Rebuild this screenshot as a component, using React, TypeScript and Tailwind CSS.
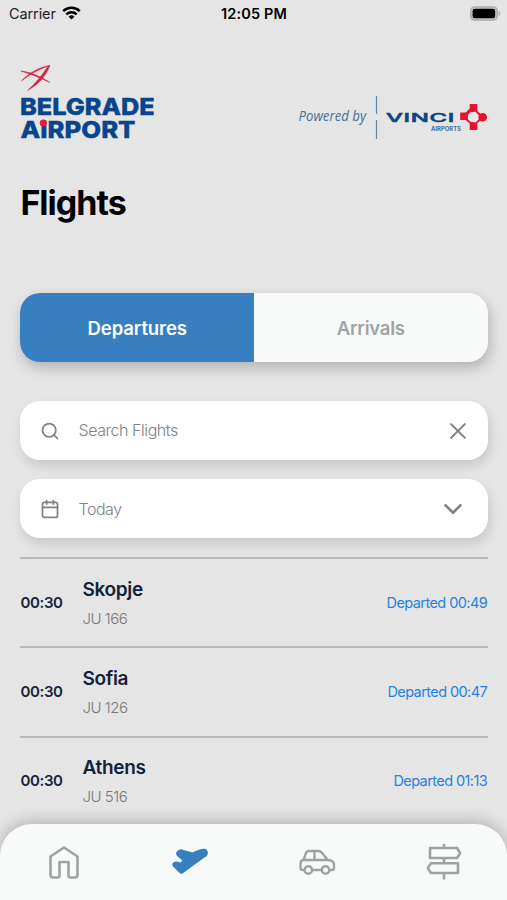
import { Calendar, ChevronDown, Search, X } from "lucide-react";

const flights = [
  { time: "00:30", city: "Skopje", code: "JU 166", status: "Departed 00:49" },
  { time: "00:30", city: "Sofia", code: "JU 126", status: "Departed 00:47" },
  { time: "00:30", city: "Athens", code: "JU 516", status: "Departed 01:13" },
];

function StatusBar() {
  return (
    <div className="grid h-7 shrink-0 grid-cols-3 items-center pl-[9px] pr-[6px] text-black">
      <div className="flex items-center gap-[6px]">
        <span className="text-[14.5px] leading-7 tracking-[-0.1px] text-[#222]">Carrier</span>
        <svg className="-translate-y-px" width="19" height="14" viewBox="0 0 19 14" fill="none" stroke="#000" strokeWidth="2.5">
          <path d="M1.2 5.2a12 12 0 0 1 16.6 0" />
          <path d="M4.3 8.4a7.6 7.6 0 0 1 10.4 0" />
          <path d="M6.6 10.7a4.2 4.2 0 0 1 5.8 0L9.5 13.6Z" fill="#000" stroke="none" />
        </svg>
      </div>
      <span className="-ml-[2px] text-center text-[14.5px] font-semibold leading-7 tracking-[0.15px]">12:05 PM</span>
      <svg className="-translate-y-px justify-self-end" width="31" height="15" viewBox="0 0 31 15">
        <rect x="0.8" y="0.8" width="26.4" height="13.4" rx="4" fill="#c4c4c4" stroke="#aaa" strokeWidth="1.3" />
        <rect x="2.6" y="2.8" width="22.6" height="9.4" rx="2.2" fill="#000" />
        <path d="M28.6 5v5c2-.8 2-4.2 0-5Z" fill="#aaa" />
      </svg>
    </div>
  );
}

function BelgradeLogo() {
  return (
    <svg width="136" height="84" viewBox="0 0 136 84">
      <g fill="#d9203f">
        <path d="M0.8 7C10 8 20 12 29.5 18.3C20 13.8 10 9.7.8 7Z" stroke="#d9203f" strokeWidth=".6" />
        <path d="M1.5 17C9 9 19 3.2 30 1.5C20 4.5 10 10 1.5 17Z" stroke="#d9203f" strokeWidth=".6" />
        <path d="M30 1.5C26 12 18 21 7.5 26.5C16 19 22 11 27 3.5Z" stroke="#d9203f" strokeWidth=".4" />
      </g>
      <g fill="#07468d" stroke="#07468d" strokeWidth=".4" fontFamily="Inter, sans-serif" fontWeight="800" fontSize="23.6">
        <text x="0" y="51" textLength="134.8" lengthAdjust="spacingAndGlyphs">BELGRADE</text>
        <text x="0.5" y="74" textLength="115" lengthAdjust="spacingAndGlyphs">AiRPORT</text>
      </g>
      <circle cx="23.3" cy="59" r="3.6" fill="#ed173d" />
    </svg>
  );
}

function VinciLogo() {
  return (
    <svg width="190" height="46" viewBox="0 0 190 46">
      <text x="0.5" y="26" fill="#467099" fontFamily="'Open Sans', sans-serif" fontStyle="italic" fontSize="14" textLength="67.5" lengthAdjust="spacingAndGlyphs">Powered by</text>
      <path d="M78.5 1v18M78.5 25v19" stroke="#5d88aa" strokeWidth="1.2" />
      <text transform="translate(88 27.4) scale(2.05 1)" fill="#0d4680" stroke="#0d4680" strokeWidth=".5" fontFamily="Inter, sans-serif" fontWeight="500" fontSize="11.7" textLength="33.3" lengthAdjust="spacing">VINCI</text>
      <text x="133" y="35.5" fill="#416d98" fontFamily="Inter, sans-serif" fontWeight="700" fontSize="6.3" textLength="30" lengthAdjust="spacingAndGlyphs">AIRPORTS</text>
      <g fill="#e5132e">
        <path d="M171.7 9h7.6v7l4.4 4v4.4l-4.4 3.6v7h-7.6v-6.4l-4-3.6h-5.5v-7.5h5.5l4-4Z" />
        <circle cx="184.7" cy="22.2" r="4.3" />
      </g>
      <path d="m172.3 17.3 5.2-.6 3 3.2v4.6l-3 2.9-5.2-.6-2.4-2.7v-4Z" fill="#e9e9e9" />
    </svg>
  );
}

function Tabs() {
  return (
    <div className="mt-[75px] flex h-[69px] shrink-0 overflow-hidden rounded-[20px] bg-[#f8faf9] text-[18.5px] font-semibold shadow-[2px_6px_14px_rgba(0,0,0,0.22)]">
      <button className="w-1/2 bg-[#387fc0] pt-[2px] tracking-[-0.1px] text-white">Departures</button>
      <button className="w-1/2 pt-[2px] tracking-[-0.2px] text-[#9ea4a5]">Arrivals</button>
    </div>
  );
}

function Navigation() {
  return (
    <nav className="grid h-[76px] shrink-0 grid-cols-4 place-items-center rounded-t-[32px] bg-[#f8faf9] text-[#9da3a5] shadow-[0_-3px_16px_rgba(0,0,0,0.22)]">
      <svg className="translate-x-px" width="36" height="40" viewBox="0 0 36 40" fill="none" stroke="currentColor" strokeWidth="2.6" strokeLinejoin="round">
        <path d="M18 5.5 31.5 14.5v18.5q0 2.5-2.5 2.5h-4.5q-2 0-2-2V20h-9v13.5q0 2-2 2H7q-2.5 0-2.5-2.5V14.5Z" />
      </svg>
      <svg width="38" height="40" viewBox="0 0 38 40" fill="#387fc0" stroke="#387fc0" strokeWidth="2" strokeLinejoin="round">
        <path d="M6.2 10.7q2.4-3.4 6-1.8L21.5 11.5l8-3.2c3.3-1.4 5.6-.4 6.2 1.2.6 1.8-.4 3.6-2.2 4.8L12 30c-1 .8-2.2.7-3 0L2.8 23.8c-1.2-1.3-.6-2.6 1.5-3.2 1.8-.5 3.4.4 5.1.6q2-.2 3.2-3L6.9 13.5Q5.4 12.1 6.2 10.7Z" />
      </svg>
      <svg width="38" height="40" viewBox="0 0 38 40" fill="none" stroke="currentColor" strokeWidth="2.4" strokeLinejoin="round">
        <path d="M6 28H4.5q-2 0-2-2v-4.5q0-3 3-3.5L8 11Q8.7 9 11 9h9.5q2 0 3.2 1.5l6 7.5q6.3.3 6.3 4.7V26q0 2-2 2H31.5M14 28h9.5M5.5 18h24.5M16.5 9v9" />
        <circle cx="10.3" cy="28" r="3.7" />
        <circle cx="27.5" cy="28" r="3.7" />
      </svg>
      <svg width="38" height="40" viewBox="0 0 38 40" fill="none" stroke="currentColor" strokeWidth="2.6" strokeLinejoin="round">
        <path d="M19 2v4M19 16v5.5M19 31v6.5M5 6h27l3.2 5-3.2 5H5ZM33 21.3H6l-3.2 4.8L6 31h27Z" />
      </svg>
    </nav>
  );
}

export default function App() {
  return (
    <div className="flex h-[900px] w-[507px] flex-col overflow-hidden bg-[#e5e5e5] font-['Inter',sans-serif]">
      <StatusBar />
      <main className="flex h-[796px] shrink-0 flex-col pl-[20.4px] pr-[19.4px]">
        <header className="flex h-[148px] shrink-0 justify-between pt-9">
          <BelgradeLogo />
          <div className="-mr-[0.6px] pt-[31px]"><VinciLogo /></div>
        </header>
        <h1 className="h-[42px] shrink-0 pt-1 text-[34px] font-bold leading-[45px] tracking-[-1px] text-black">Flights</h1>
        <Tabs />
        <div className="mt-[39px] flex h-[59px] shrink-0 items-center rounded-[20px] bg-white pl-[19.6px] pr-[18.5px] text-[#7d8285] shadow-[2px_6px_12px_rgba(0,0,0,0.13)]">
          <Search size={20} strokeWidth={2.1} />
          <span className="ml-[18.6px] flex-1 pb-[2px] text-[16px] font-light tracking-[-0.45px]">Search Flights</span>
          <X size={22} className="scale-125" strokeWidth={1.8} />
        </div>
        <div className="mt-[19px] flex h-[59px] shrink-0 items-center rounded-[20px] bg-white pl-[19.6px] pr-[19.5px] text-[#7d8285] shadow-[2px_6px_12px_rgba(0,0,0,0.13)]">
          <Calendar size={20} strokeWidth={2.1} />
          <span className="ml-[18.6px] flex-1 text-[16px] font-light tracking-[-0.5px]">Today</span>
          <ChevronDown size={30} strokeWidth={2} />
        </div>
        <div className="mt-[19px] shrink-0">
          {flights.map((flight) => (
            <div key={flight.city} className="flex h-[89.3px] items-center border-t-2 border-[#b7b9ba]">
              <time className="w-[62px] pt-px text-[15px] font-semibold tracking-[-0.35px] text-[#18243b]">{flight.time}</time>
              <div className="flex-1">
                <div className="pt-[2px] text-[19px] font-semibold leading-7 tracking-[-0.3px] text-[#13213b]">{flight.city}</div>
                <div className="mt-[2px] text-[15px] font-light leading-[26px] tracking-[-0.45px] text-[#777]">{flight.code}</div>
              </div>
              <div className="pr-[0.5px] text-[14.5px] tracking-[-0.58px] text-[#2382e2]">{flight.status}</div>
            </div>
          ))}
        </div>
      </main>
      <Navigation />
    </div>
  );
}
